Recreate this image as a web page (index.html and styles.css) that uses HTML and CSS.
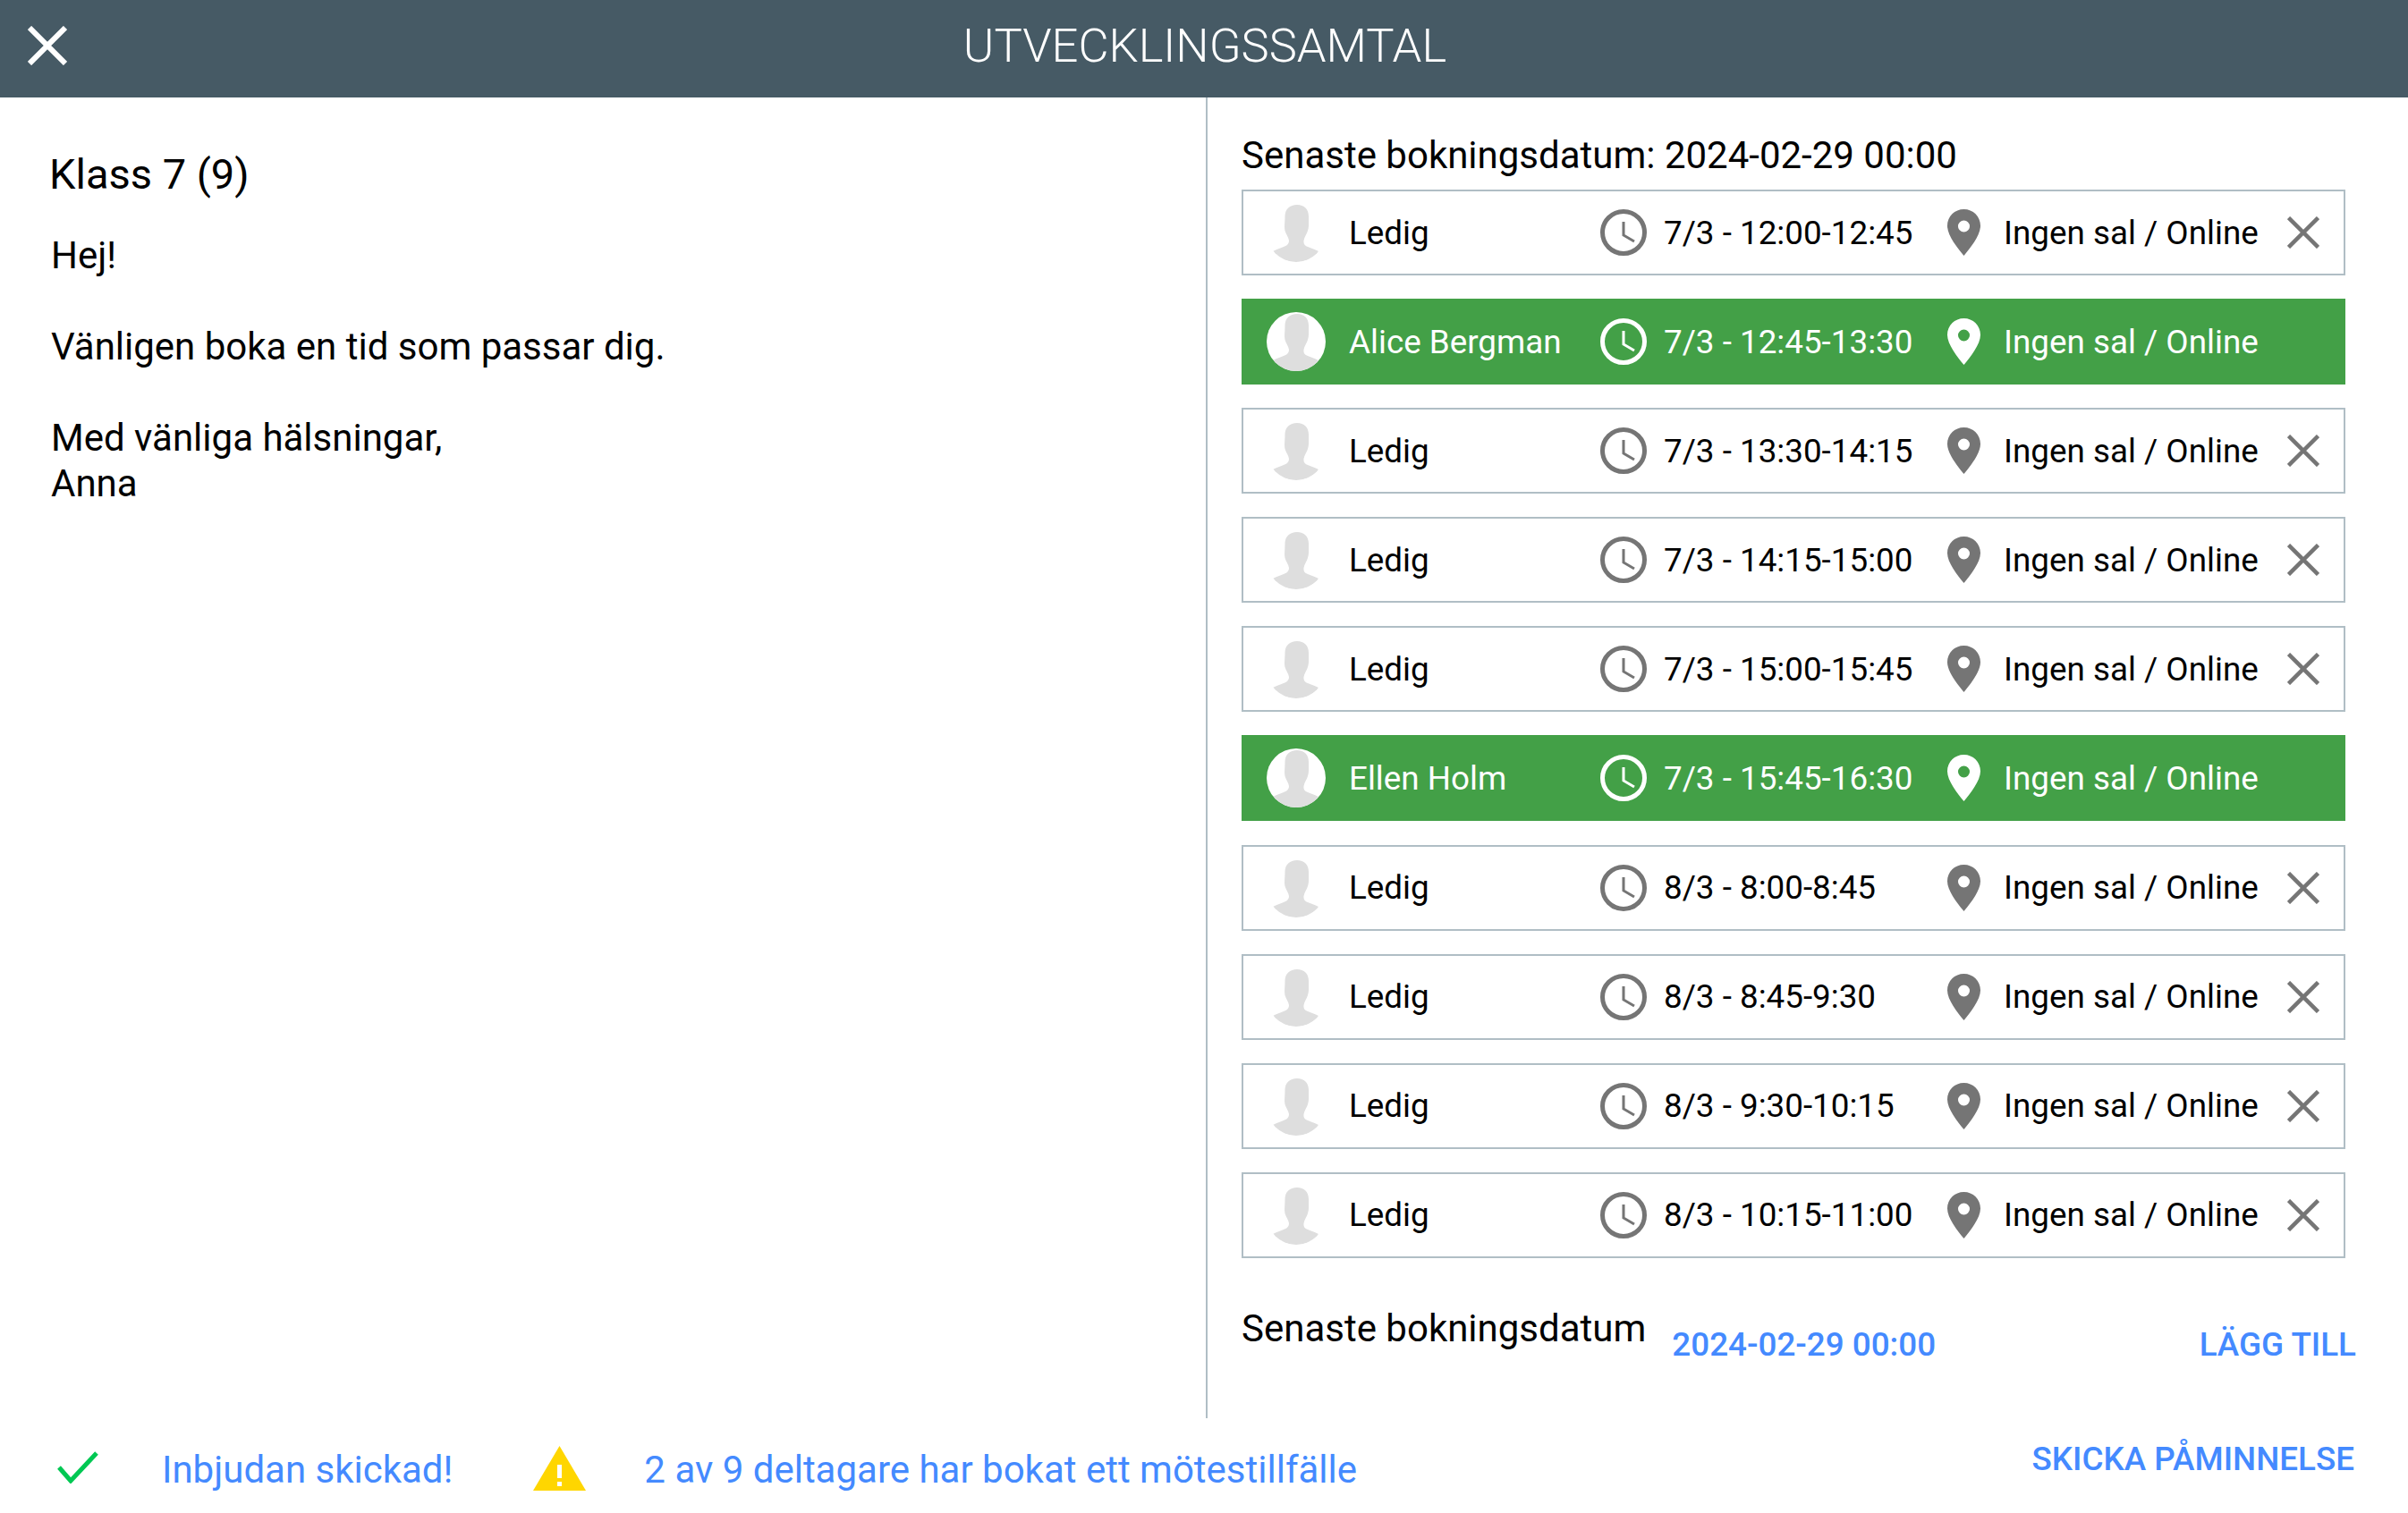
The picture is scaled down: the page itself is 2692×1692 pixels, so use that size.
FILE: index.html
```html
<!DOCTYPE html>
<html lang="sv">
<head>
<meta charset="utf-8">
<title>Utvecklingssamtal</title>
<link rel="stylesheet" href="styles.css">
</head>
<body>
<svg class="defs" width="0" height="0" aria-hidden="true">
  <defs>
    <symbol id="person" viewBox="0 0 66 66">
      <path d="M34 2c8 0 13 5 13 13 0 7 .5 12-1 16-1 4-4 7-4.500 11-.5 4 1.500 6 4.500 7 4 2 9 3 12 5-4 7-14 12-25 12S11 61 7 54c3-2 8-3 12-5 3-1 6-3 6-7-.5-4-3.500-7-4.500-11-1-4 0-9 0-16 0-8 5.500-13 13.500-13z" fill="#dedede"/>
    </symbol>
    <symbol id="clock" viewBox="0 0 52 52">
      <circle cx="26" cy="26" r="23.500" fill="none" stroke="currentColor" stroke-width="5"/>
      <path d="M26 14v15l12 7" fill="none" stroke="currentColor" stroke-width="3"/>
    </symbol>
    <symbol id="pin" viewBox="0 0 37 52">
      <path fill-rule="evenodd" d="M18.500 0C8.300 0 0 8 0 18.500 0 29 11 43 18.500 52 26 43 37 29 37 18.500 37 8 28.700 0 18.500 0zm0 12.500a6.500 6.500 0 1 1 0 13 6.500 6.500 0 0 1 0-13z" fill="currentColor"/>
    </symbol>
    <symbol id="cross" viewBox="0 0 36 36">
      <path d="M1.500 1.500l33 33M34.500 1.500l-33 33" fill="none" stroke="currentColor" stroke-width="4.500"/>
    </symbol>
  </defs>
</svg>
<div class="page">
  <header class="topbar">
    <svg class="close" viewBox="0 0 44 44"><path d="M2 2l40 40M42 2L2 42" fill="none" stroke="#fff" stroke-width="6"/></svg>
    <h1 class="title">UTVECKLINGSSAMTAL</h1>
  </header>
  <main class="content">
    <section class="left">
      <h2 class="group">Klass 7 (9)</h2>
      <p class="message">Hej!

Vänligen boka en tid som passar dig.

Med vänliga hälsningar,
Anna</p>
    </section>
    <section class="right">
      <div class="deadline">Senaste bokningsdatum: 2024-02-29 00:00</div>
      <div class="rows">
        <div class="row"><span class="avatar"><svg class="person"><use href="#person"/></svg></span><span class="name">Ledig</span><svg class="clock"><use href="#clock"/></svg><span class="time">7/3 - 12:00-12:45</span><svg class="pin"><use href="#pin"/></svg><span class="place">Ingen sal / Online</span><svg class="cross"><use href="#cross"/></svg></div>
        <div class="row booked"><span class="avatar"><svg class="person"><use href="#person"/></svg></span><span class="name">Alice Bergman</span><svg class="clock"><use href="#clock"/></svg><span class="time">7/3 - 12:45-13:30</span><svg class="pin"><use href="#pin"/></svg><span class="place">Ingen sal / Online</span></div>
        <div class="row"><span class="avatar"><svg class="person"><use href="#person"/></svg></span><span class="name">Ledig</span><svg class="clock"><use href="#clock"/></svg><span class="time">7/3 - 13:30-14:15</span><svg class="pin"><use href="#pin"/></svg><span class="place">Ingen sal / Online</span><svg class="cross"><use href="#cross"/></svg></div>
        <div class="row"><span class="avatar"><svg class="person"><use href="#person"/></svg></span><span class="name">Ledig</span><svg class="clock"><use href="#clock"/></svg><span class="time">7/3 - 14:15-15:00</span><svg class="pin"><use href="#pin"/></svg><span class="place">Ingen sal / Online</span><svg class="cross"><use href="#cross"/></svg></div>
        <div class="row"><span class="avatar"><svg class="person"><use href="#person"/></svg></span><span class="name">Ledig</span><svg class="clock"><use href="#clock"/></svg><span class="time">7/3 - 15:00-15:45</span><svg class="pin"><use href="#pin"/></svg><span class="place">Ingen sal / Online</span><svg class="cross"><use href="#cross"/></svg></div>
        <div class="row booked"><span class="avatar"><svg class="person"><use href="#person"/></svg></span><span class="name">Ellen Holm</span><svg class="clock"><use href="#clock"/></svg><span class="time">7/3 - 15:45-16:30</span><svg class="pin"><use href="#pin"/></svg><span class="place">Ingen sal / Online</span></div>
        <div class="row"><span class="avatar"><svg class="person"><use href="#person"/></svg></span><span class="name">Ledig</span><svg class="clock"><use href="#clock"/></svg><span class="time">8/3 - 8:00-8:45</span><svg class="pin"><use href="#pin"/></svg><span class="place">Ingen sal / Online</span><svg class="cross"><use href="#cross"/></svg></div>
        <div class="row"><span class="avatar"><svg class="person"><use href="#person"/></svg></span><span class="name">Ledig</span><svg class="clock"><use href="#clock"/></svg><span class="time">8/3 - 8:45-9:30</span><svg class="pin"><use href="#pin"/></svg><span class="place">Ingen sal / Online</span><svg class="cross"><use href="#cross"/></svg></div>
        <div class="row"><span class="avatar"><svg class="person"><use href="#person"/></svg></span><span class="name">Ledig</span><svg class="clock"><use href="#clock"/></svg><span class="time">8/3 - 9:30-10:15</span><svg class="pin"><use href="#pin"/></svg><span class="place">Ingen sal / Online</span><svg class="cross"><use href="#cross"/></svg></div>
        <div class="row"><span class="avatar"><svg class="person"><use href="#person"/></svg></span><span class="name">Ledig</span><svg class="clock"><use href="#clock"/></svg><span class="time">8/3 - 10:15-11:00</span><svg class="pin"><use href="#pin"/></svg><span class="place">Ingen sal / Online</span><svg class="cross"><use href="#cross"/></svg></div>
      </div>
      <div class="add">
        <span class="add-label">Senaste bokningsdatum</span>
        <span class="add-date">2024-02-29 00:00</span>
        <span class="add-btn">LÄGG TILL</span>
      </div>
    </section>
  </main>
  <footer class="status">
    <svg class="check" viewBox="0 0 46 36"><path d="M2 18l13 15L44 2" fill="none" stroke="#00c853" stroke-width="5"/></svg>
    <span class="status-text sent">Inbjudan skickad!</span>
    <svg class="warn" viewBox="0 0 59 50"><path d="M29.500 0L59 50H0z" fill="#ffd600"/><path d="M27 21h5v15h-5zM27 40h5v5h-5z" fill="#fff"/></svg>
    <span class="status-text invited">2 av 9 deltagare har bokat ett mötestillfälle</span>
    <span class="remind">SKICKA PÅMINNELSE</span>
  </footer>
</div>
</body>
</html>
```
FILE: styles.css
```css
* { box-sizing: border-box; }
html, body { margin: 0; padding: 0; }
body { background: #fff; color: #000; font-family: Roboto, "Liberation Sans", sans-serif; overflow: hidden; }
.defs { position: absolute; }
.page { width: 2692px; height: 1692px; display: flex; flex-direction: column; }

.topbar { height: 109px; flex: none; background: #465a65; display: flex; align-items: center; justify-content: center; position: relative; }
.close { position: absolute; left: 31px; top: 29px; width: 44px; height: 44px; }
.title { margin: 0 0 6px 2px; font-weight: 300; font-size: 52.500px; line-height: 1; color: #fff; }

.content { display: flex; height: 1477px; flex: none; }
.left { width: 1348px; flex: none; padding: 58px 0 0 55px; }
.group { margin: 0; font-weight: 400; font-size: 47px; line-height: 56px; }
.message { margin: 37px 0 0 2px; font-size: 42px; line-height: 51px; white-space: pre-line; }

.right { flex: 1; border-left: 2px solid #b0bec5; padding: 41px 0 0 38px; }
.deadline { font-size: 42px; line-height: 48px; height: 62px; }
.rows { width: 1234px; display: flex; flex-direction: column; gap: 26.100px; }
.row { height: 96px; display: flex; align-items: center; border: 2px solid #b0bec5; padding-left: 26px; font-size: 36.800px; color: #000; }
.row.booked { background: #43a047; border-color: #43a047; color: #fff; }
.avatar { width: 66px; height: 66px; flex: none; border-radius: 50%; overflow: hidden; display: block; }
.booked .avatar { background: #fff; }
.person { width: 66px; height: 66px; display: block; }
.name { width: 281px; flex: none; margin-left: 26px; }
.clock { width: 52px; height: 52px; flex: none; color: #757575; }
.time { width: 317px; flex: none; margin-left: 19px; }
.pin { width: 37px; height: 52px; flex: none; color: #757575; }
.place { width: 290px; flex: none; margin-left: 26px; }
.booked .clock, .booked .pin { color: #fff; }
.cross { width: 36px; height: 36px; flex: none; color: #757575; margin-left: 27px; }

.add { width: 1246px; display: flex; margin-top: 55px; height: 70px; }
.add-label { font-size: 42px; line-height: 48px; }
.add-date { font-size: 36.800px; font-weight: 500; color: #448aff; margin-left: 29px; line-height: 44px; margin-top: 20px; }
.add-btn { margin-left: auto; font-size: 36.800px; font-weight: 500; color: #448aff; line-height: 44px; margin-top: 20px; }

.status { flex: 1; display: flex; align-items: center; padding: 6px 0 0 64px; }
.check { width: 46px; height: 36px; flex: none; margin-top: -2px; }
.status-text { font-size: 42px; color: #448aff; margin-top: 2px; }
.sent { margin-left: 71px; }
.warn { width: 59px; height: 50px; flex: none; margin-left: 90px; }
.invited { margin-left: 65px; }
.remind { margin-left: auto; margin-right: 60px; font-size: 36.800px; font-weight: 500; color: #448aff; margin-top: -21px; }
```
